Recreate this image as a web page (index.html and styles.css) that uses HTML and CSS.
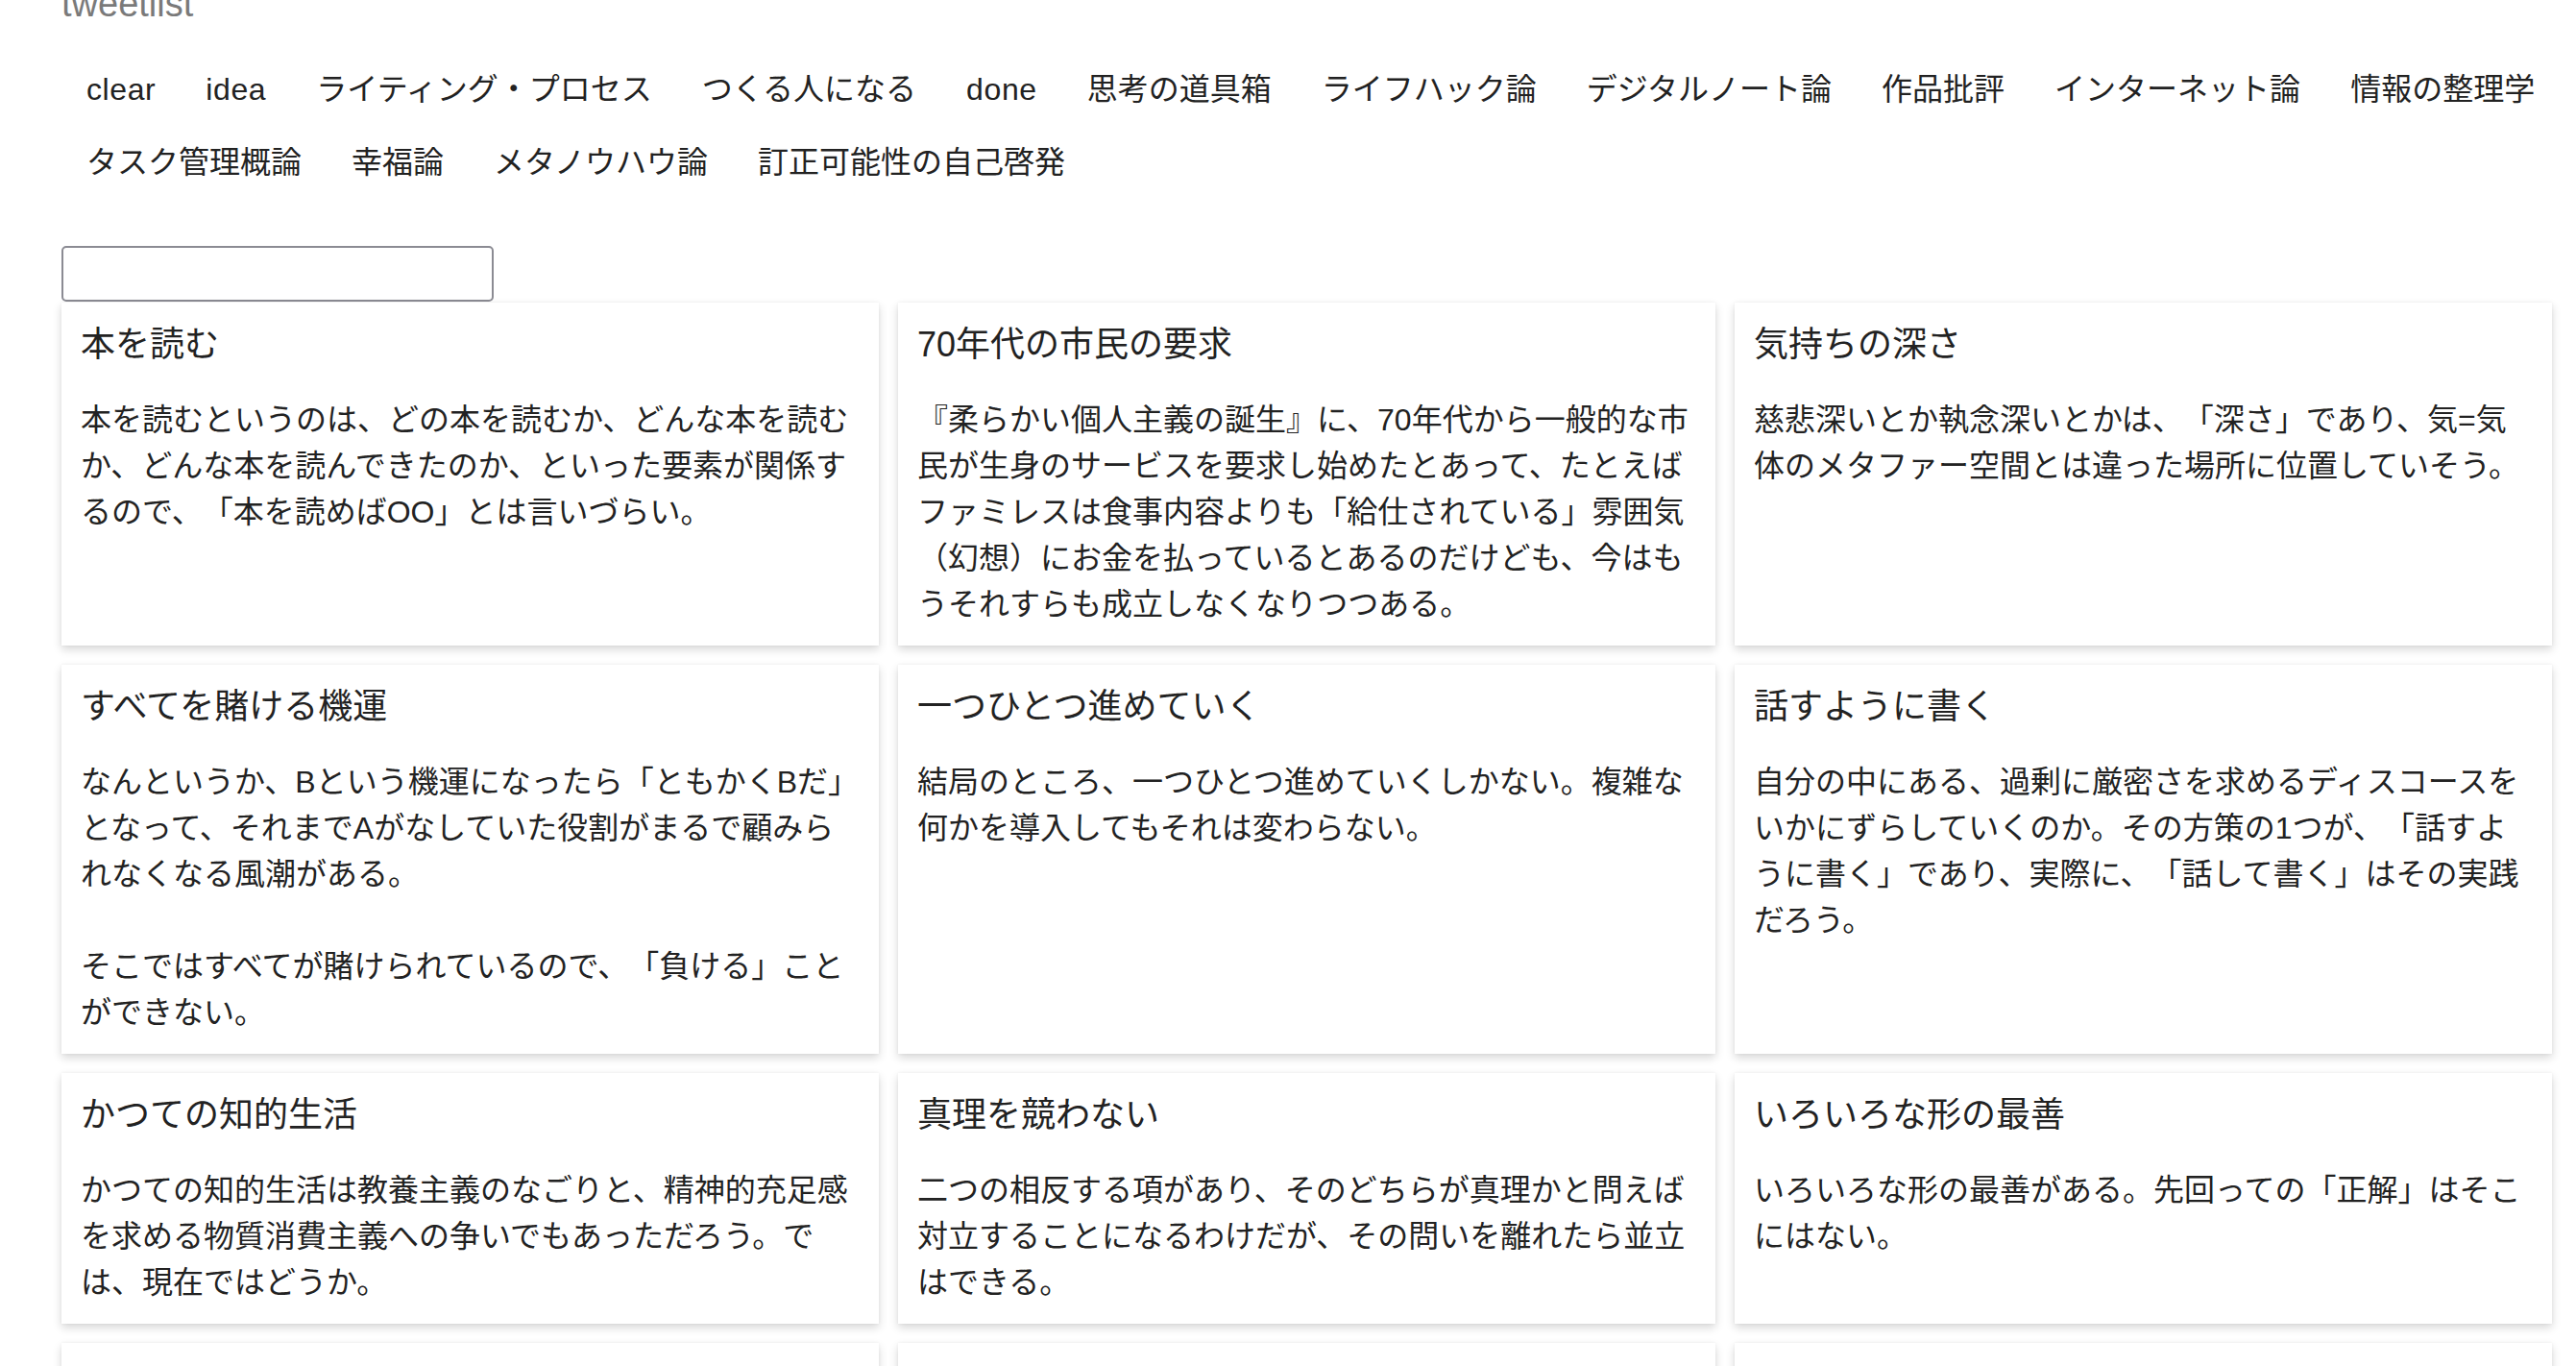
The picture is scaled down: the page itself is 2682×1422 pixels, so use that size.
FILE: index.html
```html
<!DOCTYPE html>
<html lang="ja">
<head>
<meta charset="utf-8">
<title>tweetlist</title>
<link rel="stylesheet" href="styles.css">
</head>
<body>
<div class="page">
  <h1 class="site-title">tweetlist</h1>
  <nav class="tags">
    <a class="tag tag-en" href="#">clear</a>
    <a class="tag tag-en" href="#">idea</a>
    <a class="tag" href="#">ライティング・プロセス</a>
    <a class="tag" href="#">つくる人になる</a>
    <a class="tag tag-en" href="#">done</a>
    <a class="tag" href="#">思考の道具箱</a>
    <a class="tag" href="#">ライフハック論</a>
    <a class="tag" href="#">デジタルノート論</a>
    <a class="tag" href="#">作品批評</a>
    <a class="tag" href="#">インターネット論</a>
    <a class="tag" href="#">情報の整理学</a>
    <a class="tag" href="#">タスク管理概論</a>
    <a class="tag" href="#">幸福論</a>
    <a class="tag" href="#">メタノウハウ論</a>
    <a class="tag" href="#">訂正可能性の自己啓発</a>
  </nav>
  <input class="search" type="text" aria-label="search">
  <div class="cards">
    <article class="card">
      <h2 class="card-title">本を読む</h2>
      <div class="card-body"><p>本を読むというのは、どの本を読むか、どんな本を読むか、どんな本を読んできたのか、といった要素が関係するので、「本を読めばOO」とは言いづらい。</p></div>
    </article>
    <article class="card">
      <h2 class="card-title">70年代の市民の要求</h2>
      <div class="card-body"><p>『柔らかい個人主義の誕生』に、70年代から一般的な市民が生身のサービスを要求し始めたとあって、たとえばファミレスは食事内容よりも「給仕されている」雰囲気（幻想）にお金を払っているとあるのだけども、今はもうそれすらも成立しなくなりつつある。</p></div>
    </article>
    <article class="card">
      <h2 class="card-title">気持ちの深さ</h2>
      <div class="card-body"><p>慈悲深いとか執念深いとかは、「深さ」であり、気=気体のメタファー空間とは違った場所に位置していそう。</p></div>
    </article>
    <article class="card">
      <h2 class="card-title">すべてを賭ける機運</h2>
      <div class="card-body"><p>なんというか、Bという機運になったら「ともかくBだ」となって、それまでAがなしていた役割がまるで顧みられなくなる風潮がある。</p><p>そこではすべてが賭けられているので、「負ける」ことができない。</p></div>
    </article>
    <article class="card">
      <h2 class="card-title">一つひとつ進めていく</h2>
      <div class="card-body"><p>結局のところ、一つひとつ進めていくしかない。複雑な何かを導入してもそれは変わらない。</p></div>
    </article>
    <article class="card">
      <h2 class="card-title">話すように書く</h2>
      <div class="card-body"><p>自分の中にある、過剰に厳密さを求めるディスコースをいかにずらしていくのか。その方策の1つが、「話すように書く」であり、実際に、「話して書く」はその実践だろう。</p></div>
    </article>
    <article class="card">
      <h2 class="card-title">かつての知的生活</h2>
      <div class="card-body"><p>かつての知的生活は教養主義のなごりと、精神的充足感を求める物質消費主義への争いでもあっただろう。では、現在ではどうか。</p></div>
    </article>
    <article class="card">
      <h2 class="card-title">真理を競わない</h2>
      <div class="card-body"><p>二つの相反する項があり、そのどちらが真理かと問えば対立することになるわけだが、その問いを離れたら並立はできる。</p></div>
    </article>
    <article class="card">
      <h2 class="card-title">いろいろな形の最善</h2>
      <div class="card-body"><p>いろいろな形の最善がある。先回っての「正解」はそこにはない。</p></div>
    </article>
    <article class="card">
      <h2 class="card-title">書くことと考えること</h2>
      <div class="card-body"><p>書くことは考えることであり、考えることは書くことでもある。</p></div>
    </article>
    <article class="card">
      <h2 class="card-title">小さな一歩</h2>
      <div class="card-body"><p>大きな目標も、小さな一歩の積み重ねでしか進まない。</p></div>
    </article>
    <article class="card">
      <h2 class="card-title">道具と習慣</h2>
      <div class="card-body"><p>道具は習慣をつくり、習慣は道具の使い方を変えていく。</p></div>
    </article>
  </div>
</div>
</body>
</html>
```
FILE: styles.css
```css
html, body {
  margin: 0;
  padding: 0;
  background: #ffffff;
}

body {
  font-family: "Liberation Sans", "Noto Sans CJK JP", sans-serif;
  color: #222222;
  text-spacing-trim: space-all;
  overflow: hidden;
}

.page {
  padding: 0 0 0 64px;
}

.site-title {
  margin: -16px 0 0 0;
  font-size: 38px;
  line-height: 40px;
  font-weight: 400;
  color: #7a7a7a;
}

.tags {
  display: flex;
  flex-wrap: wrap;
  margin-top: 31px;
}

.tag {
  display: block;
  padding: 14px 26px;
  font-size: 32px;
  line-height: 48px;
  color: #222222;
  text-decoration: none;
}

.tag-en {
  letter-spacing: 0.6px;
}

.search {
  display: block;
  box-sizing: border-box;
  width: 450px;
  height: 58px;
  margin: 49px 0 0 0;
  padding: 0 10px;
  border: 2px solid #8b8b93;
  border-radius: 5px;
  background: #ffffff;
  font-size: 28px;
}

.cards {
  display: grid;
  grid-template-columns: repeat(3, 1fr);
  column-gap: 20px;
  row-gap: 20px;
  margin: 1px 25px 0 0;
}

.card {
  background: #ffffff;
  padding: 20px 16px 19px 20px;
  box-shadow: 0 4px 9px rgba(0, 0, 0, 0.16), 0 0 3px rgba(0, 0, 0, 0.05);
}

.card-title {
  margin: 0;
  font-size: 36px;
  line-height: 47px;
  font-weight: 400;
  color: #222222;
}

.card-body {
  margin-top: 31px;
  font-size: 32px;
  line-height: 48px;
}

.card-body p {
  margin: 0;
}

.card-body p + p {
  margin-top: 48px;
}
```
